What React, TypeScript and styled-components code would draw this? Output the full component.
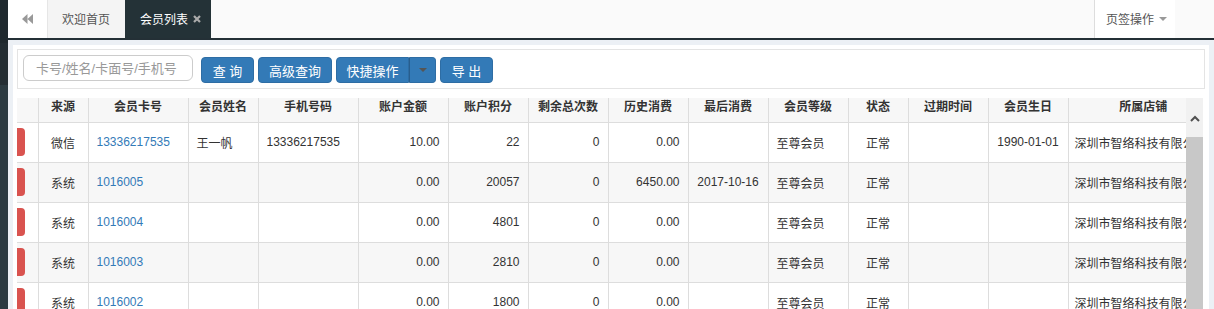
import styled, { createGlobalStyle } from 'styled-components'

const GlobalStyle = createGlobalStyle`
  html, body {
    margin: 0;
    padding: 0;
    overflow: hidden;
  }
  body {
    font-family: 'Liberation Sans', 'Noto Sans CJK SC', sans-serif;
    font-size: 12px;
    color: #333;
  }
  * {
    box-sizing: border-box;
  }
`

const Page = styled.div`
  display: flex;
  width: 1214px;
  height: 309px;
  overflow: hidden;
`

const Sidebar = styled.div`
  width: 8px;
  display: flex;
  flex-direction: column;
`

const SideSeg = styled.div<{ bg: string; h?: number }>`
  background: ${(p) => p.bg};
  height: ${(p) => (p.h ? `${p.h}px` : 'auto')};
  flex: ${(p) => (p.h ? 'none' : 1)};
`

const Main = styled.div`
  flex: 1;
  display: flex;
  flex-direction: column;
  background: #ecf0f5;
  min-width: 0;
`

// 상단 탭 바
const TabBar = styled.div`
  height: 40px;
  display: flex;
  background: #fafafa;
  border-bottom: 2px solid #243036;
`

const BackBtn = styled.div`
  width: 40px;
  background: #fff;
  border-right: 1px solid #e6e6e6;
  display: flex;
  align-items: center;
  justify-content: center;
  padding-bottom: 1px;
`

const Tab = styled.div<{ active?: boolean }>`
  display: flex;
  align-items: center;
  gap: 4px;
  padding: 0 ${(p) => (p.active ? '10px' : '15px')} 1px ${(p) => (p.active ? '15px' : '14px')};
  background: ${(p) => (p.active ? '#243237' : '#f4f4f4')};
  color: ${(p) => (p.active ? '#fff' : '#555')};
  font-size: 12px;
`

const CloseX = styled.svg`
  margin-left: 1px;
  margin-top: 1px;
`

const Spacer = styled.div`
  flex: 1;
`

const TabMenu = styled.div`
  width: 81px;
  margin-right: 39px;
  background: #fff;
  border-left: 1px solid #ddd;
  display: flex;
  align-items: center;
  padding: 0 0 1px 11px;
  gap: 5px;
  color: #555;
`

const Caret = styled.span<{ color?: string }>`
  display: inline-block;
  width: 0;
  height: 0;
  border-left: 4px solid transparent;
  border-right: 4px solid transparent;
  border-top: 4px solid ${(p) => p.color || '#999'};
`

const Content = styled.div`
  flex: 1;
  padding: 5px 5px 0;
  min-height: 0;
`

const Panel = styled.div`
  background: #fff;
  height: 100%;
  padding: 4px 4px 0;
  display: flex;
  flex-direction: column;
`

const SearchBox = styled.div`
  height: 40px;
  border: 1px solid #e4e4e4;
  display: flex;
  align-items: flex-start;
  padding: 5px 5px 0;
`

const Input = styled.input`
  width: 170px;
  height: 26px;
  border: 1px solid #ccc;
  border-radius: 6px;
  padding: 0 12px;
  font-family: 'Liberation Sans', 'Noto Sans CJK SC', sans-serif;
  font-size: 13px;
  color: #555;
  margin-right: 8px;
  outline: none;
  &::placeholder {
    color: #999;
  }
`

const Btn = styled.button<{ w: number; split?: 'left' | 'right' }>`
  width: ${(p) => p.w}px;
  height: 26px;
  margin-top: 2px;
  margin-right: ${(p) => (p.split === 'left' ? 0 : '4px')};
  background: #337ab7;
  border: 1px solid #2e6da4;
  border-left-color: ${(p) => (p.split === 'right' ? '#285e8e' : '#2e6da4')};
  border-radius: ${(p) =>
    p.split === 'left' ? '4px 0 0 4px' : p.split === 'right' ? '0 4px 4px 0' : '4px'};
  color: #fff;
  font-family: 'Liberation Sans', 'Noto Sans CJK SC', sans-serif;
  font-size: 13px;
  padding: 0;
  display: flex;
  align-items: center;
  justify-content: center;
`

// 테이블 영역
const TableWrap = styled.div`
  margin-top: 9px;
  margin-right: 2px;
  flex: 1;
  display: flex;
  min-height: 0;
  overflow: hidden;
`

const TableScroll = styled.div`
  flex: 1;
  overflow: hidden;
`

const Table = styled.table`
  border-collapse: collapse;
  table-layout: fixed;
  width: 1201px;
`

const Th = styled.th`
  height: 24px;
  padding: 1px 4px 0;
  vertical-align: top;
  line-height: 17px;
  background: #f7f7f7;
  border-left: 1px solid #ddd;
  border-bottom: 1px solid #ddd;
  font-weight: bold;
  font-size: 12px;
  color: #333;
  text-align: center;
  white-space: nowrap;
  overflow: hidden;
  &:first-child {
    border-left: none;
  }
`

const Tr = styled.tr<{ striped?: boolean }>`
  height: 40px;
  background: ${(p) => (p.striped ? '#f7f7f7' : '#fff')};
`

const Td = styled.td<{ align?: 'left' | 'right' | 'center' }>`
  padding: 0 8px;
  border-left: 1px solid #ddd;
  border-bottom: 1px solid #ddd;
  text-align: ${(p) => p.align || 'left'};
  white-space: nowrap;
  overflow: hidden;
  color: #333;
  font-size: 12px;
  &:first-child {
    border-left: none;
    padding: 0;
  }
`

const ShopTd = styled(Td)`
  padding-left: 6px;
`

const OpCell = styled.div`
  overflow: hidden;
  height: 28px;
`

const OpBtn = styled.div`
  width: 30px;
  height: 28px;
  margin-left: -22px;
  background: #d9534f;
  border-radius: 4px;
`

const Link = styled.span`
  color: #337ab7;
`

const Scrollbar = styled.div`
  width: 17px;
  background: #c8c8c8;
  display: flex;
  flex-direction: column;
`

const ScrollTop = styled.div`
  height: 39px;
  background: #f1f1f1;
  display: flex;
  justify-content: center;
  padding-top: 17px;
`

type Member = {
  source: string
  card: string
  name: string
  phone: string
  balance: string
  points: string
  times: string
  history: string
  last: string
  level: string
  status: string
  expire: string
  birthday: string
  shop: string
}

const shop = '深圳市智络科技有限公司'

const members: Member[] = [
  {
    source: '微信',
    card: '13336217535',
    name: '王一帆',
    phone: '13336217535',
    balance: '10.00',
    points: '22',
    times: '0',
    history: '0.00',
    last: '',
    level: '至尊会员',
    status: '正常',
    expire: '',
    birthday: '1990-01-01',
    shop,
  },
  {
    source: '系统',
    card: '1016005',
    name: '',
    phone: '',
    balance: '0.00',
    points: '20057',
    times: '0',
    history: '6450.00',
    last: '2017-10-16',
    level: '至尊会员',
    status: '正常',
    expire: '',
    birthday: '',
    shop,
  },
  {
    source: '系统',
    card: '1016004',
    name: '',
    phone: '',
    balance: '0.00',
    points: '4801',
    times: '0',
    history: '0.00',
    last: '',
    level: '至尊会员',
    status: '正常',
    expire: '',
    birthday: '',
    shop,
  },
  {
    source: '系统',
    card: '1016003',
    name: '',
    phone: '',
    balance: '0.00',
    points: '2810',
    times: '0',
    history: '0.00',
    last: '',
    level: '至尊会员',
    status: '正常',
    expire: '',
    birthday: '',
    shop,
  },
  {
    source: '系统',
    card: '1016002',
    name: '',
    phone: '',
    balance: '0.00',
    points: '1800',
    times: '0',
    history: '0.00',
    last: '',
    level: '至尊会员',
    status: '正常',
    expire: '',
    birthday: '',
    shop,
  },
]

const columns = [
  { title: '', w: 21 },
  { title: '来源', w: 50 },
  { title: '会员卡号', w: 100 },
  { title: '会员姓名', w: 70 },
  { title: '手机号码', w: 100 },
  { title: '账户金额', w: 90 },
  { title: '账户积分', w: 80 },
  { title: '剩余总次数', w: 80 },
  { title: '历史消费', w: 80 },
  { title: '最后消费', w: 80 },
  { title: '会员等级', w: 80 },
  { title: '状态', w: 60 },
  { title: '过期时间', w: 80 },
  { title: '会员生日', w: 80 },
  { title: '所属店铺', w: 150 },
]

function App() {
  return (
    <>
      <GlobalStyle />
      <Page>
        <Sidebar>
          <SideSeg bg="#1f292e" h={43} />
          <SideSeg bg="#232d33" h={42} />
          <SideSeg bg="#2b3a41" />
        </Sidebar>
        <Main>
          <TabBar>
            <BackBtn>
              <svg width="11" height="10" viewBox="0 0 11 10">
                <path d="M5.5 0 L0 5 L5.5 10 Z M11 0 L5.5 5 L11 10 Z" fill="#999" />
              </svg>
            </BackBtn>
            <Tab>欢迎首页</Tab>
            <Tab active>
              会员列表
              <CloseX width="8" height="8" viewBox="0 0 8 8">
                <path d="M1 1 L7 7 M7 1 L1 7" stroke="#aaa" strokeWidth="2.2" />
              </CloseX>
            </Tab>
            <Spacer />
            <TabMenu>
              页签操作
              <Caret />
            </TabMenu>
          </TabBar>
          <Content>
            <Panel>
              <SearchBox>
                <Input placeholder="卡号/姓名/卡面号/手机号" />
                <Btn w={53}>查 询</Btn>
                <Btn w={74}>高级查询</Btn>
                <Btn w={73} split="left">
                  快捷操作
                </Btn>
                <Btn w={27} split="right">
                  <Caret color="#555" />
                </Btn>
                <Btn w={53}>导 出</Btn>
              </SearchBox>
              <TableWrap>
                <TableScroll>
                  <Table>
                    <colgroup>
                      {columns.map((c, i) => (
                        <col key={i} style={{ width: c.w }} />
                      ))}
                    </colgroup>
                    <thead>
                      <tr>
                        {columns.map((c, i) => (
                          <Th key={i}>{c.title}</Th>
                        ))}
                      </tr>
                    </thead>
                    <tbody>
                      {members.map((m, i) => (
                        <Tr key={m.card} striped={i % 2 === 1}>
                          <Td>
                            <OpCell>
                              <OpBtn />
                            </OpCell>
                          </Td>
                          <Td align="center">{m.source}</Td>
                          <Td>
                            <Link>{m.card}</Link>
                          </Td>
                          <Td>{m.name}</Td>
                          <Td>{m.phone}</Td>
                          <Td align="right">{m.balance}</Td>
                          <Td align="right">{m.points}</Td>
                          <Td align="right">{m.times}</Td>
                          <Td align="right">{m.history}</Td>
                          <Td align="center">{m.last}</Td>
                          <Td>{m.level}</Td>
                          <Td align="center">{m.status}</Td>
                          <Td align="center">{m.expire}</Td>
                          <Td align="center">{m.birthday}</Td>
                          <ShopTd>{m.shop}</ShopTd>
                        </Tr>
                      ))}
                    </tbody>
                  </Table>
                </TableScroll>
                <Scrollbar>
                  <ScrollTop>
                    <svg width="10" height="7" viewBox="0 0 10 7">
                      <path d="M1 6 L5 2 L9 6" stroke="#505050" strokeWidth="2" fill="none" />
                    </svg>
                  </ScrollTop>
                </Scrollbar>
              </TableWrap>
            </Panel>
          </Content>
        </Main>
      </Page>
    </>
  )
}

export default App
